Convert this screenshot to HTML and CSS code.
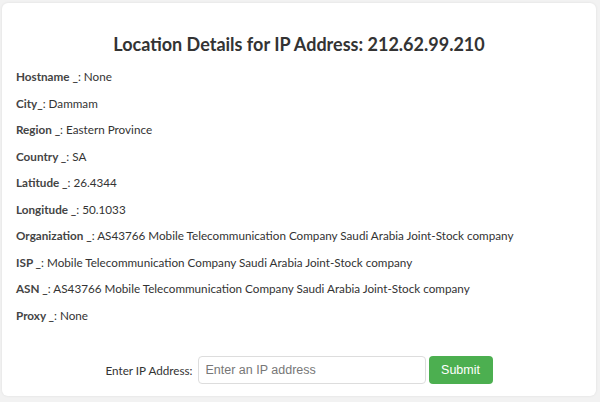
FILE: index.html
```html
<!DOCTYPE html>
<html>
<head>
<meta charset="utf-8">
<link rel="stylesheet" href="styles.css">
</head>
<body>
<div class="card">
  <h1 class="title">Location Details for IP Address: 212.62.99.210</h1>
  <div class="details">
    <p class="row"><strong>Hostname _</strong>: None</p>
    <p class="row"><strong>City_</strong>: Dammam</p>
    <p class="row"><strong>Region _</strong>: Eastern Province</p>
    <p class="row"><strong>Country _</strong>: SA</p>
    <p class="row"><strong>Latitude _</strong>: 26.4344</p>
    <p class="row"><strong>Longitude _</strong>: 50.1033</p>
    <p class="row"><strong>Organization _</strong>: AS43766 Mobile Telecommunication Company Saudi Arabia Joint-Stock company</p>
    <p class="row"><strong>ISP _</strong>: Mobile Telecommunication Company Saudi Arabia Joint-Stock company</p>
    <p class="row"><strong>ASN _</strong>: AS43766 Mobile Telecommunication Company Saudi Arabia Joint-Stock company</p>
    <p class="row"><strong>Proxy _</strong>: None</p>
  </div>
  <form class="ip-form">
    <label class="ip-label" for="ip">Enter IP Address:</label>
    <input class="ip-input" id="ip" type="text" placeholder="Enter an IP address">
    <button class="ip-submit" type="button">Submit</button>
  </form>
</div>
</body>
</html>
```

FILE: styles.css
```css
html, body {
  margin: 0;
  padding: 0;
}
body {
  background: #f2f2f2;
  padding: 3px 4px 6px 2px;
  font-family: Lato, "Open Sans", sans-serif;
  color: #333;
}
.card {
  background: #fff;
  border-radius: 6px;
  box-shadow: 0 0 3px rgba(0,0,0,0.08);
  padding: 29px 14px 11px 14px;
  height: 353px;
}
.title {
  margin: 0 0 13px 0;
  font-size: 18px;
  font-weight: 700;
  text-align: center;
  line-height: 24px;
  color: #333;
}
.details {
  display: flex;
  flex-direction: column;
  gap: 12px;
}
.row {
  margin: 0;
  font-size: 11.7px;
  line-height: 14.5px;
  color: #333;
}
.row strong {
  font-weight: 700;
  color: #444;
}
.ip-form {
  display: flex;
  justify-content: center;
  align-items: center;
  margin-top: 34px;
  gap: 4px;
}
.ip-label {
  font-size: 11.7px;
  color: #333;
  margin-right: 1px;
}
.ip-input {
  box-sizing: border-box;
  width: 228px;
  height: 28px;
  border: 1px solid #ddd;
  border-radius: 4px;
  padding: 0 7px;
  font-family: "Liberation Sans", Arial, sans-serif;
  font-size: 12.5px;
  color: #333;
  margin-right: -1px;
}
.ip-input::placeholder {
  color: #777;
}
.ip-submit {
  box-sizing: border-box;
  width: 64px;
  height: 28px;
  border: none;
  border-radius: 4px;
  background: #4caf50;
  color: #fff;
  font-family: "Liberation Sans", Arial, sans-serif;
  font-size: 12.5px;
}
```
